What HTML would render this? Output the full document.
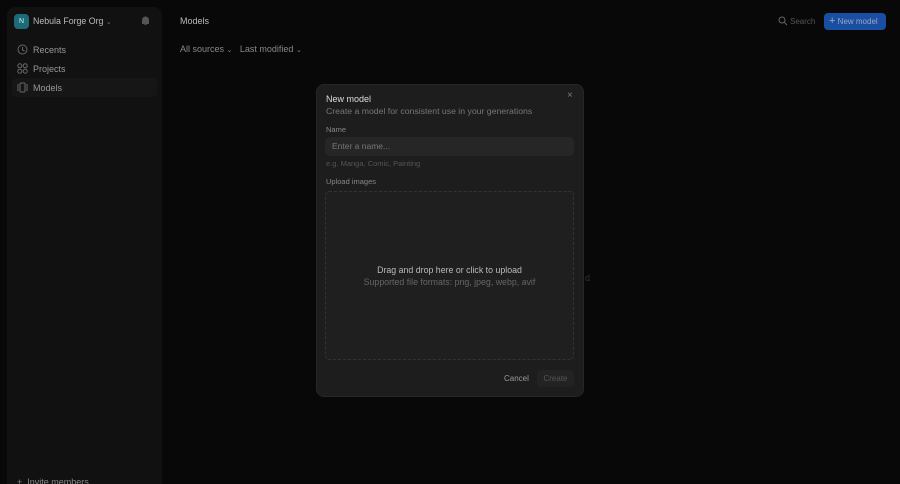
<!DOCTYPE html>
<html style="width:900px;height:484px;overflow:hidden"><head><style>
*{box-sizing:border-box;margin:0;padding:0}
body{width:900px;height:484px;background:#080808;font-family:"Liberation Sans",sans-serif;position:relative;overflow:hidden;color:#ccc}
.sb{position:absolute;left:7px;top:7px;width:155px;height:490px;background:#111;border-radius:8px}
.t{position:absolute;white-space:nowrap}
.modal{position:absolute;left:316px;top:84px;width:268px;height:313px;background:#1d1d1d;border-radius:8px;border:1px solid #262626}
</style></head><body>
<div class="sb"></div>
<div class="t" style="left:14px;top:14px;width:15px;height:15px;background:#1d6a78;border-radius:4px;color:#bfe;font-size:7px;text-align:center;line-height:15px">N</div>
<div class="t" style="left:33px;top:16px;font-size:8.8px;color:#bbb">Nebula Forge Org <span style="font-size:7px;color:#777">⌄</span></div>
<svg class="t" style="left:141px;top:16px" width="9" height="10" viewBox="0 0 9 10"><path d="M1.5 7.5V4a3 3 0 0 1 6 0v3.5zM3.5 8.5h2" fill="#555" stroke="#555"/></svg>
<svg class="t" style="left:17px;top:44px" width="11" height="11" viewBox="0 0 11 11"><circle cx="5.5" cy="5.5" r="4.5" fill="none" stroke="#666"/><path d="M5.5 3v3l2 1" stroke="#666" fill="none"/></svg>
<div class="t" style="left:33px;top:45px;font-size:9px;color:#999">Recents</div>
<svg class="t" style="left:17px;top:63px" width="11" height="11" viewBox="0 0 11 11" fill="none" stroke="#666"><circle cx="2.8" cy="2.8" r="2"/><circle cx="8.2" cy="2.8" r="2"/><circle cx="2.8" cy="8.2" r="2"/><circle cx="8.2" cy="8.2" r="2"/></svg>
<div class="t" style="left:33px;top:64px;font-size:9px;color:#999">Projects</div>
<div class="t" style="left:12px;top:78px;width:145px;height:19px;background:#161616;border-radius:5px"></div>
<svg class="t" style="left:17px;top:82px" width="11" height="11" viewBox="0 0 11 11" fill="none" stroke="#666"><rect x="3" y="1" width="5" height="9" rx="1"/><path d="M1 2v7M10 2v7"/></svg>
<div class="t" style="left:33px;top:83px;font-size:9px;color:#999">Models</div>
<div class="t" style="left:17px;top:477px;font-size:9px;color:#888">+ &nbsp;Invite members</div>
<div class="t" style="left:180px;top:16px;font-size:9px;color:#bbb">Models</div>
<div class="t" style="left:180px;top:44px;font-size:9px;color:#888">All sources <span style="font-size:7px">⌄</span> &nbsp; Last modified <span style="font-size:7px">⌄</span></div>
<svg class="t" style="left:778px;top:16px" width="10" height="10" viewBox="0 0 10 10" fill="none" stroke="#666"><circle cx="4" cy="4" r="3"/><path d="M6.3 6.3L9 9"/></svg>
<div class="t" style="left:790px;top:17px;font-size:8px;color:#555">Search</div>
<div class="t" style="left:824px;top:13px;width:62px;height:17px;background:#1a4ea3;border-radius:4px;font-size:8px;color:#9ab;line-height:17px;padding-left:5px"><span style="font-size:11px">+</span> New model</div>
<div class="t" style="left:585px;top:273px;font-size:9px;color:#333">d</div>
<div class="modal"></div>
<div class="t" style="left:326px;top:94px;font-size:9px;color:#ddd">New model</div>
<div class="t" style="left:567px;top:90px;font-size:10px;color:#777">×</div>
<div class="t" style="left:326px;top:106px;font-size:8.7px;color:#777">Create a model for consistent use in your generations</div>
<div class="t" style="left:326px;top:125px;font-size:7.5px;color:#888">Name</div>
<div class="t" style="left:325px;top:137px;width:249px;height:19px;background:#262626;border-radius:5px;font-size:8.5px;color:#777;line-height:19px;padding-left:7px">Enter a name...</div>
<div class="t" style="left:326px;top:159px;font-size:7.5px;color:#555">e.g. Manga, Comic, Painting</div>
<div class="t" style="left:326px;top:177px;font-size:7.5px;color:#888">Upload images</div>
<div class="t" style="left:325px;top:191px;width:249px;height:169px;border:1px dashed #333;border-radius:4px;background:#1f1f1f"></div>
<div class="t" style="left:325px;top:265px;width:249px;text-align:center;font-size:8.8px;color:#bbb">Drag and drop here or click to upload</div>
<div class="t" style="left:325px;top:277px;width:249px;text-align:center;font-size:8.8px;color:#666">Supported file formats: png, jpeg, webp, avif</div>
<div class="t" style="left:504px;top:374px;font-size:8px;color:#999">Cancel</div>
<div class="t" style="left:537px;top:370px;width:37px;height:17px;background:#232323;border-radius:4px;font-size:8px;color:#555;text-align:center;line-height:17px">Create</div>
</body></html>
